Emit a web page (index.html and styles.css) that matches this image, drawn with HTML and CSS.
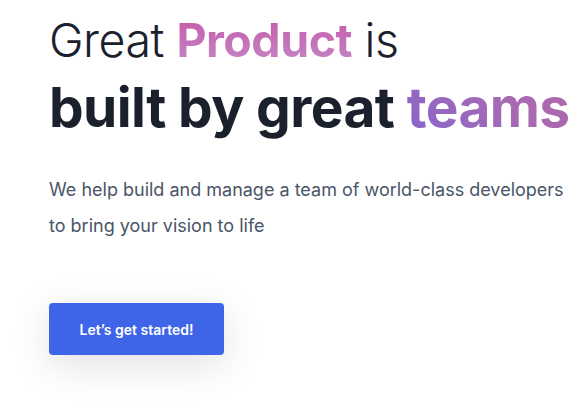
FILE: index.html
```html
<!DOCTYPE html>
<html>
<head>
<meta charset="utf-8">
<link rel="stylesheet" href="styles.css">
</head>
<body>
<section class="hero">
  <h1 class="title">
    <span class="line-light">Great <span class="grad-product">Product</span> is</span>
    <span class="line-bold">built by great <span class="grad-teams">teams</span></span>
  </h1>
  <p class="lead">We help build and manage a team of world-class developers to bring your vision to life</p>
  <div class="actions">
    <button class="cta">Let’s get started!</button>
  </div>
</section>
</body>
</html>
```

FILE: styles.css
```css
html, body {
  margin: 0;
  padding: 0;
  background: #ffffff;
}
body {
  font-family: Inter, "Noto Sans", sans-serif;
}
.hero {
  padding: 12px 0 60px 49px;
}
.title {
  margin: 0;
  font-weight: 400;
  color: #1a202c;
}
.line-light {
  display: block;
  font-size: 46.5px;
  font-weight: 300;
  line-height: 56px;
  letter-spacing: -0.5px;
}
.line-bold {
  display: block;
  font-size: 55px;
  font-weight: 700;
  line-height: 78px;
  letter-spacing: -0.6px;
  white-space: nowrap;
}
.grad-product {
  font-weight: 700;
  background: linear-gradient(180deg, #c557a7 0%, #c48ac6 100%);
  -webkit-background-clip: text;
  background-clip: text;
  color: transparent;
}
.grad-teams {
  background: linear-gradient(45deg, #8566cc 0%, #a869b4 60%, #b167a6 100%);
  -webkit-background-clip: text;
  background-clip: text;
  color: transparent;
}
.lead {
  margin: 26px 0 0;
  width: 520px;
  font-size: 18px;
  line-height: 36px;
  color: #4a5568;
}
.actions {
  margin-top: 59px;
}
.cta {
  width: 175px;
  height: 52px;
  border: none;
  border-radius: 4px;
  background: #3e65e8;
  color: #ffffff;
  font-family: Inter, sans-serif;
  font-size: 14px;
  font-weight: 600;
  box-shadow: 0 10px 40px rgba(0, 0, 0, 0.12);
}
```
